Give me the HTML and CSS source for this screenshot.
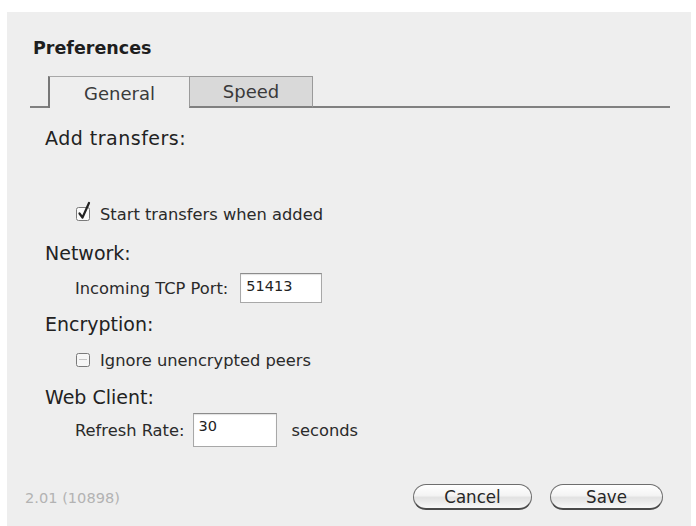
FILE: index.html
```html
<!DOCTYPE html>
<html>
<head>
<meta charset="utf-8">
<title>Preferences</title>
<link rel="stylesheet" href="styles.css">
</head>
<body>
<div class="panel">
  <div class="title">Preferences</div>
  <div class="tabbar">
    <div class="tab-lead"></div>
    <div class="tab tab-active">General</div>
    <div class="tab tab-inactive">Speed</div>
    <div class="tab-fill"></div>
  </div>

  <div class="heading h-add">Add transfers:</div>
  <div class="row r-start">
    <svg class="check" width="17" height="20" viewBox="0 0 17 20">
      <rect x="1.5" y="6.5" width="13" height="13" rx="2" fill="#fafafa" stroke="#7a7a7a"/>
      <path d="M4.5 12.5 L7.5 16.5 L14 2" fill="none" stroke="#222" stroke-width="2.2" stroke-linecap="round" stroke-linejoin="round"/>
    </svg>
    <span class="label">Start transfers when added</span>
  </div>

  <div class="heading h-net">Network:</div>
  <div class="row r-port">
    <span class="label">Incoming TCP Port:</span>
    <span class="field f-port">51413</span>
  </div>

  <div class="heading h-enc">Encryption:</div>
  <div class="row r-ignore">
    <svg class="check" width="17" height="20" viewBox="0 0 17 20">
      <rect x="1.5" y="6.5" width="13" height="13" rx="2" fill="#f6f6f6" stroke="#7a7a7a"/>
      <line x1="4" y1="12.5" x2="12" y2="12.5" stroke="#c4c4c4" stroke-width="1"/>
    </svg>
    <span class="label">Ignore unencrypted peers</span>
  </div>

  <div class="heading h-web">Web Client:</div>
  <div class="row r-refresh">
    <span class="label">Refresh Rate:</span>
    <span class="field f-rate">30</span>
    <span class="label unit">seconds</span>
  </div>

  <div class="footer">
    <span class="version">2.01 (10898)</span>
    <div class="buttons">
      <span class="btn btn-cancel">Cancel</span>
      <span class="btn btn-save">Save</span>
    </div>
  </div>
</div>
</body>
</html>
```

FILE: styles.css
```css
html, body {
  margin: 0;
  padding: 0;
  background: #ffffff;
}
body {
  width: 696px;
  height: 526px;
  overflow: hidden;
  font-family: "DejaVu Sans", "Liberation Sans", sans-serif;
  color: #262626;
}
.panel {
  margin: 12px 5px 0 7px;
  height: 514px;
  background: #eeeeee;
  padding-top: 24px;
  box-sizing: border-box;
}
.title {
  height: 24px;
  line-height: 24px;
  padding-left: 26px;
  font-size: 17.5px;
  font-weight: bold;
  color: #1e1e1e;
}
.tabbar {
  display: flex;
  margin: 16px 0 0 23px;
  width: 640px;
  height: 32px;
}
.tab-lead {
  width: 18px;
  border-bottom: 2px solid #808080;
}
.tab {
  box-sizing: border-box;
  height: 32px;
  font-size: 18px;
  color: #3a3a3a;
  display: flex;
  align-items: center;
  justify-content: center;
}
.tab-active {
  width: 141px;
  border-left: 2px solid #777777;
  border-top: 1px solid #a8a8a8;
  padding-top: 2px;
}
.tab-inactive {
  width: 124px;
  background: #d9d9d9;
  border: 1px solid #9a9a9a;
  border-bottom: 2px solid #808080;
}
.tab-fill {
  flex: 1;
  border-bottom: 2px solid #808080;
}
.heading {
  height: 24px;
  line-height: 24px;
  padding-left: 38px;
  font-size: 19px;
  color: #222222;
}
.h-add { margin-top: 18px; letter-spacing: 0.5px; }
.h-net { margin-top: 15px; }
.h-enc { margin-top: 9px; }
.h-web { margin-top: 13px; }
.row {
  display: flex;
  align-items: center;
  padding-left: 68px;
}
.r-start { margin-top: 52px; height: 24px; }
.r-port { margin-top: 8px; height: 30px; }
.r-ignore { margin-top: 12px; height: 24px; }
.r-refresh { margin-top: 4px; height: 34px; }
.check {
  margin-right: 8px;
  margin-top: -6px;
}
.label {
  font-size: 16.3px;
  color: #2a2a2a;
  white-space: nowrap;
}
.field {
  box-sizing: border-box;
  background: #ffffff;
  border: 1px solid #a8a8a8;
  border-top-color: #8c8c8c;
  box-shadow: inset 0 1px 1px rgba(0,0,0,0.12);
  font-size: 14.5px;
  color: #222;
  display: flex;
  align-items: center;
}
.f-port {
  width: 82px;
  height: 30px;
  margin-left: 12px;
  padding: 0 0 4px 5px;
}
.f-rate {
  width: 84px;
  height: 34px;
  margin-left: 9px;
  padding: 0 0 8px 4px;
}
.unit { margin-left: 14px; }
.footer {
  margin-top: 37px;
  height: 26px;
  display: flex;
  align-items: center;
  justify-content: space-between;
  padding: 0 28px 0 18px;
}
.version {
  font-size: 14.6px;
  color: #b3b3b3;
}
.buttons {
  display: flex;
  gap: 18px;
}
.btn {
  box-sizing: border-box;
  height: 26px;
  border-radius: 13px;
  border: 1.5px solid #6e6e6e;
  border-bottom: 2px solid #4a4a4a;
  background: linear-gradient(#ffffff 0%, #f4f4f4 45%, #e2e2e2 55%, #f8f8f8 100%);
  font-family: "DejaVu Sans Condensed", "DejaVu Sans", sans-serif;
  font-size: 18.5px;
  color: #262626;
  display: flex;
  align-items: center;
  justify-content: center;
}
.btn-cancel { width: 119px; }
.btn-save { width: 113px; }
```
